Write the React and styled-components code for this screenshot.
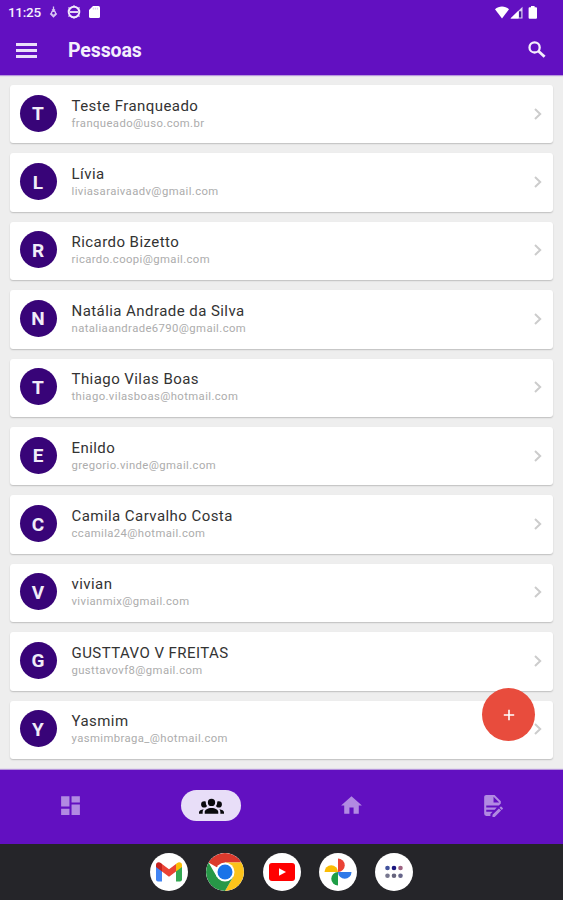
import React from 'react';
import styled, { createGlobalStyle } from 'styled-components';

const people = [
    { name: 'Teste Franqueado', email: 'franqueado@uso.com.br' },
    { name: 'Lívia', email: 'liviasaraivaadv@gmail.com' },
    { name: 'Ricardo Bizetto', email: 'ricardo.coopi@gmail.com' },
    { name: 'Natália Andrade da Silva', email: 'nataliaandrade6790@gmail.com' },
    { name: 'Thiago Vilas Boas', email: 'thiago.vilasboas@hotmail.com' },
    { name: 'Enildo', email: 'gregorio.vinde@gmail.com' },
    { name: 'Camila Carvalho Costa', email: 'ccamila24@hotmail.com' },
    { name: 'vivian', email: 'vivianmix@gmail.com' },
    { name: 'GUSTTAVO V FREITAS', email: 'gusttavovf8@gmail.com' },
    { name: 'Yasmim', email: 'yasmimbraga_@hotmail.com' },
];

const tabs = [
    { id: 'dashboard', path: 'M13,3V9H21V3M13,21H21V11H13M3,21H11V15H3M3,13H11V3H3V13Z' },
    {
        id: 'people',
        active: true,
        path: 'M12,5.5A3.5,3.5 0 0,1 15.5,9A3.5,3.5 0 0,1 12,12.5A3.5,3.5 0 0,1 8.5,9A3.5,3.5 0 0,1 12,5.5M5,8C5.56,8 6.08,8.15 6.53,8.42C6.38,9.85 6.8,11.27 7.66,12.38C7.16,13.34 6.16,14 5,14A3,3 0 0,1 2,11A3,3 0 0,1 5,8M19,8A3,3 0 0,1 22,11A3,3 0 0,1 19,14C17.84,14 16.84,13.34 16.34,12.38C17.2,11.27 17.62,9.85 17.47,8.42C17.92,8.15 18.44,8 19,8M5.5,18.25C5.5,16.18 8.41,14.5 12,14.5C15.59,14.5 18.5,16.18 18.5,18.25V20H5.5V18.25M0,20V18.5C0,17.11 1.89,15.94 4.45,15.6C3.86,16.28 3.5,17.22 3.5,18.25V20H0M24,20H20.5V18.25C20.5,17.22 20.14,16.28 19.55,15.6C22.11,15.94 24,17.11 24,18.5V20Z',
    },
    { id: 'home', path: 'M10,20V14H14V20H19V12H22L12,3L2,12H5V20H10Z' },
    {
        id: 'document',
        path: 'M6,2C4.89,2 4,2.9 4,4V20A2,2 0 0,0 6,22H10V20.09L12.09,18H6V16H14.09L16.09,14H6V12H18.09L20,10.09V8L14,2H6M13,3.5L18.5,9H13V3.5M20.15,13C20,13 19.86,13.05 19.75,13.16L18.73,14.18L20.82,16.26L21.84,15.25C22.05,15.03 22.05,14.67 21.84,14.46L20.54,13.16C20.43,13.05 20.29,13 20.15,13M18.14,14.77L12,20.92V23H14.08L20.23,16.85L18.14,14.77Z',
    },
];

const StatusIcons = () => (
    <StatusLeft>
        <svg width="9" height="12" viewBox="0 0 9 12" fill="none" stroke="#d9c8f3" strokeWidth="1.3">
            <path d="M4.5 0.5V5M3 3.5L4.5 5L6 3.5" />
            <circle cx="4.5" cy="7.2" r="2" />
            <path d="M1.2 7.5L4.5 10.8L7.8 7.5" />
        </svg>
        <svg width="14" height="14" viewBox="0 0 14 14" fill="none" stroke="#f1eafb">
            <circle cx="7" cy="7" r="5.3" strokeWidth="2" />
            <path d="M3 7H11" strokeWidth="1.8" />
            <path d="M7 0.3V2M7 12V13.7M1.5 2.5L3 4M12.5 2.5L11 4M1.5 11.5L3 10M12.5 11.5L11 10" strokeWidth="1.2" />
        </svg>
        <svg width="11" height="12" viewBox="0 0 11 12">
            <path d="M4 0H9.5Q11 0 11 1.5V10.5Q11 12 9.5 12H1.5Q0 12 0 10.5V4Z" fill="#fff" />
            <path d="M4.3 1.6V3.6M6.3 1.6V3.6M8.3 1.6V3.6" stroke="#cdb8ee" strokeWidth="0.8" />
        </svg>
    </StatusLeft>
);

const SignalIcons = () => (
    <svg width="43" height="14" viewBox="0 0 43 14">
        <path d="M0 3.2C4 -0.4 10 -0.4 14 3.2L7 12.4Z" fill="#fff" />
        <path d="M15.5 12.5L27.5 0.8V12.5Z" fill="#dccff3" />
        <path d="M15.5 12.5L23.5 4.7V12.5Z" fill="#fff" />
        <path d="M24 5.3H26.3V11.5H24Z" fill="#43199a" />
        <path d="M36 0H39.6V1.3H41Q42 1.3 42 2.3V11.7Q42 12.7 41 12.7H34.6Q33.6 12.7 33.6 11.7V2.3Q33.6 1.3 34.6 1.3H36Z" fill="#fff" />
    </svg>
);

const Gmail = () => (
    <svg width="26" height="20" viewBox="0 0 26 20">
        <path d="M0 4V17.5Q0 19.5 2 19.5H6V8Z" fill="#4285f4" />
        <path d="M20 8V19.5H24Q26 19.5 26 17.5V4Z" fill="#34a853" />
        <path d="M20 2V9.5L26 5V3C26 0 23 -0.7 20.8 1.2Z" fill="#fbbc04" />
        <path d="M6 9.5V2L13 7.2L20 2V9.5L13 14.7Z" fill="#ea4335" />
        <path d="M0 3V5L6 9.5V2L5.2 1.2C3 -0.7 0 0 0 3Z" fill="#c5221f" />
    </svg>
);

const Chrome = () => (
    <svg width="38" height="38" viewBox="0 0 38 38">
        <path d="M19 19L2.55 9.5A19 19 0 0 1 35.45 9.5H19Z" fill="#db3a2d" />
        <path d="M19 9.5H35.45A19 19 0 0 1 19 38L27.2 23.8Z" fill="#fcc31a" />
        <path d="M10.8 23.8L2.55 9.5A19 19 0 0 0 19 38L27.2 23.8Z" fill="#279847" />
        <circle cx="19" cy="19" r="9.5" fill="#fff" />
        <circle cx="19" cy="19" r="7.5" fill="#1a73e8" />
    </svg>
);

const YouTube = () => (
    <svg width="26" height="18" viewBox="0 0 26 18">
        <rect width="26" height="18" rx="3" fill="#f00" />
        <path d="M10 5.2L17 9L10 12.8Z" fill="#fff" />
    </svg>
);

const Photos = () => (
    <svg width="28" height="28" viewBox="0 0 28 28">
        <path d="M14 0.5A6.75 6.75 0 0 1 14 14Z" fill="#ea4335" />
        <path d="M27.5 14A6.75 6.75 0 0 1 14 14Z" fill="#3079e8" />
        <path d="M14 27.5A6.75 6.75 0 0 1 14 14Z" fill="#1e9e46" />
        <path d="M0.5 14A6.75 6.75 0 0 1 14 14Z" fill="#fbbc04" />
    </svg>
);

const AllApps = () => (
    <svg width="20" height="14" viewBox="0 0 20 14">
        <circle cx="3.5" cy="3" r="2.3" fill="#42529d" />
        <circle cx="10" cy="3" r="2.3" fill="#1b167f" />
        <circle cx="16.5" cy="3" r="2.3" fill="#9d6382" />
        <circle cx="3.5" cy="10.8" r="2.3" fill="#77778f" />
        <circle cx="10" cy="10.8" r="2.3" fill="#66647d" />
        <circle cx="16.5" cy="10.8" r="2.3" fill="#66658a" />
    </svg>
);

const App = () => {
    return (
        <Screen>
            <GlobalStyle />
            <Header>
                <StatusBar>
                    <Clock>11:25</Clock>
                    <StatusIcons />
                    <SignalIcons />
                </StatusBar>
                <Toolbar>
                    <MenuButton aria-label="Menu">
                        <span />
                        <span />
                        <span />
                    </MenuButton>
                    <Title>Pessoas</Title>
                    <SearchButton aria-label="Buscar">
                        <svg width="18" height="17" viewBox="0 0 18 17" fill="none" stroke="#f4effc">
                            <circle cx="6.6" cy="6.4" r="5.1" strokeWidth="2.3" />
                            <path d="M10.3 10L16.6 15.8" strokeWidth="2.8" />
                        </svg>
                    </SearchButton>
                </Toolbar>
            </Header>
            <List>
                {people.map((person) => (
                    <Card key={person.email}>
                        <Avatar>{person.name[0].toUpperCase()}</Avatar>
                        <Info>
                            <Name>{person.name}</Name>
                            <Email>{person.email}</Email>
                        </Info>
                        <svg width="8" height="12" viewBox="0 0 8 12" fill="none" stroke="#cccccc" strokeWidth="2">
                            <path d="M1 1L6.2 6L1 11" />
                        </svg>
                    </Card>
                ))}
                <AddButton aria-label="Adicionar">
                    <svg width="12" height="12" viewBox="0 0 12 12" stroke="#fff" strokeWidth="1.6">
                        <path d="M6 0.8V11.2M0.8 6H11.2" />
                    </svg>
                </AddButton>
            </List>
            <BottomNav>
                {tabs.map((tab) => (
                    <Tab key={tab.id}>
                        <Pill $active={tab.active}>
                            <svg width="25" height="25" viewBox="0 0 24 24" fill="currentColor">
                                <path d={tab.path} />
                            </svg>
                        </Pill>
                    </Tab>
                ))}
            </BottomNav>
            <Taskbar>
                <AppIcon><Gmail /></AppIcon>
                <AppIcon><Chrome /></AppIcon>
                <AppIcon><YouTube /></AppIcon>
                <AppIcon><Photos /></AppIcon>
                <AppIcon><AllApps /></AppIcon>
            </Taskbar>
        </Screen>
    );
};

export default App;

const GlobalStyle = createGlobalStyle`
    * {
        box-sizing: border-box;
    }
    body {
        margin: 0;
        font-family: Roboto, sans-serif;
    }
    button {
        padding: 0;
        border: none;
        background: none;
    }
    svg {
        display: block;
        flex-shrink: 0;
    }
`;

const Screen = styled.div`
    display: flex;
    flex-direction: column;
    width: 563px;
    height: 900px;
    overflow: hidden;
    background: #eeeeee;
`;

const Header = styled.header`
    height: 75px;
    background: #6210c1;
    color: #f4effc;
    box-shadow: 0 1px 1px rgba(98, 16, 193, 0.4);
`;

const StatusBar = styled.div`
    display: flex;
    align-items: center;
    height: 25px;
    padding: 0 25px 0 8px;
`;

const Clock = styled.span`
    width: 41px;
    font-size: 13.5px;
    font-weight: 500;
    line-height: 25px;
    letter-spacing: -0.3px;
`;

const StatusLeft = styled.div`
    display: flex;
    flex: 1;
    align-items: center;
    gap: 9px;
    margin-top: -1px;

    svg:nth-child(2) {
        margin-right: -1px;
    }
`;

const Toolbar = styled.div`
    display: flex;
    align-items: center;
    height: 50px;
    padding: 0 17px 0 16px;
`;

const MenuButton = styled.button`
    display: flex;
    flex-direction: column;
    gap: 3px;
    width: 21px;

    span {
        height: 3px;
        background: #eadffa;
    }
`;

const Title = styled.h1`
    flex: 1;
    margin: 0 0 0 31px;
    font-size: 19.5px;
    font-weight: 700;
    letter-spacing: -0.1px;
`;

const SearchButton = styled.button`
    margin-top: -2px;
`;

const List = styled.main`
    position: relative;
    display: flex;
    flex-direction: column;
    gap: 10px;
    height: 694.5px;
    padding: 10px 10px 0;
`;

const Card = styled.div`
    display: flex;
    align-items: center;
    height: 58.4px;
    padding: 0 11px 1px 9.5px;
    flex-shrink: 0;
    border-radius: 3px;
    background: #fff;
    box-shadow: 0 1px 1.5px rgba(0, 0, 0, 0.2);
`;

const Avatar = styled.div`
    display: flex;
    align-items: center;
    justify-content: center;
    width: 37px;
    height: 37px;
    margin-top: -1px;
    padding-top: 1px;
    border-radius: 50%;
    background: #380478;
    color: #f1ecf8;
    font-size: 19px;
    font-weight: 700;
`;

const Info = styled.div`
    flex: 1;
    margin: 1px 0 0 15px;
`;

const Name = styled.div`
    color: #333333;
    font-size: 15px;
    line-height: 18px;
    letter-spacing: 0.44px;
`;

const Email = styled.div`
    color: #acacac;
    font-size: 11.3px;
    line-height: 17px;
    letter-spacing: 0.4px;
`;

const AddButton = styled.button`
    position: absolute;
    right: 28px;
    bottom: 28.5px;
    display: flex;
    align-items: center;
    justify-content: center;
    width: 53px;
    height: 53px;
    border-radius: 50%;
    background: #e84c3d;
`;

const BottomNav = styled.nav`
    display: flex;
    height: 74.5px;
    padding-top: 20px;
    background: #6210c1;
    box-shadow: 0 -1px 1px rgba(98, 16, 193, 0.4);
`;

const Tab = styled.div`
    display: flex;
    flex: 1;
    justify-content: center;
`;

const Pill = styled.div`
    display: flex;
    align-items: center;
    justify-content: center;
    width: 60px;
    height: 31px;
    border-radius: 16px;
    background: ${(props) => (props.$active ? '#e8def8' : 'transparent')};
    color: ${(props) => (props.$active ? '#0a0a0e' : '#b18ae2')};
`;

const Taskbar = styled.footer`
    display: flex;
    align-items: center;
    justify-content: center;
    gap: 18.3px;
    height: 56px;
    background: #252529;
`;

const AppIcon = styled.div`
    display: flex;
    align-items: center;
    justify-content: center;
    width: 38px;
    height: 38px;
    overflow: hidden;
    border-radius: 50%;
    background: #fff;
`;
